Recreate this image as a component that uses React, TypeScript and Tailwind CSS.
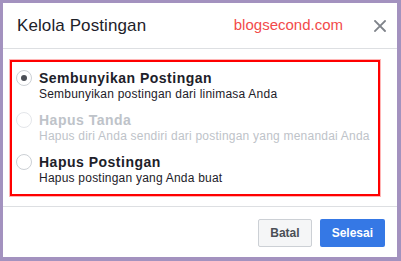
import React from "react";

function Radio({ checked, disabled }: { checked?: boolean; disabled?: boolean }) {
  return (
    <div
      className={
        "w-[16px] h-[16px] rounded-full border flex items-center justify-center shrink-0 bg-white " +
        (disabled ? "border-[#e4e6ea]" : "border-[#ccd0d5]")
      }
    >
      {checked && <div className="w-[6px] h-[6px] rounded-full bg-[#4b4f56]" />}
    </div>
  );
}

function Row({
  title,
  desc,
  checked,
  disabled,
}: {
  title: string;
  desc: string;
  checked?: boolean;
  disabled?: boolean;
}) {
  return (
    <div className="flex gap-[7px]">
      <Radio checked={checked} disabled={disabled} />
      <div className="flex flex-col">
        <div
          className={
            "text-[14px] leading-[16px] font-bold tracking-[0.5px] " +
            (disabled ? "text-[#bec3c9]" : "text-[#1d2129]")
          }
        >
          {title}
        </div>
        <div
          className={
            "text-[12px] leading-[16px] tracking-[0.22px] " +
            (disabled ? "text-[#bec3c9]" : "text-[#1d2129]")
          }
        >
          {desc}
        </div>
      </div>
    </div>
  );
}

export default function App() {
  return (
    <div
      className="w-[401px] h-[261px] bg-[#a392bf] pt-[3px] pl-[3px] pr-[4px] pb-[4px]"
      style={{ fontFamily: '"Liberation Sans", Arial, sans-serif' }}
    >
      <div className="bg-white h-full flex flex-col">
        <div className="h-[46px] shrink-0 flex items-center justify-between pl-[14px] pr-[11px] border-b border-[#dddfe2]">
          <div className="text-[17px] text-[#1d2129] tracking-[0.1px]">Kelola Postingan</div>
          <div className="flex items-center gap-[31px]">
            <div className="text-[15px] text-[#f24a4a]">blogsecond.com</div>
            <svg width="12" height="12" viewBox="0 0 12 12">
              <path d="M1 1 L11 11 M11 1 L1 11" stroke="#7f838a" strokeWidth="1.8" strokeLinecap="square" />
            </svg>
          </div>
        </div>
        <div className="flex-1 pl-[7px] pt-[11px]">
          <div className="w-[370px] h-[136px] border-2 border-[#ff0000] shadow-[0_0_0_1px_rgba(255,90,90,0.45)] pt-[8px] pl-[4px] flex flex-col gap-[10px]">
            <Row
              checked
              title="Sembunyikan Postingan"
              desc="Sembunyikan postingan dari linimasa Anda"
            />
            <Row
              disabled
              title="Hapus Tanda"
              desc="Hapus diri Anda sendiri dari postingan yang menandai Anda"
            />
            <Row title="Hapus Postingan" desc="Hapus postingan yang Anda buat" />
          </div>
        </div>
        <div className="h-[51px] shrink-0 border-t border-[#dddfe2] flex justify-end items-start pt-[12px] pr-[12px] gap-[8px]">
          <button className="h-[28px] px-[11px] rounded-[2px] border border-[#ccd0d5] bg-[#f5f6f7] text-[#4b4f56] text-[12px] font-bold">
            Batal
          </button>
          <button className="h-[28px] px-[12px] rounded-[2px] bg-[#3578e5] text-white text-[12px] font-bold">
            Selesai
          </button>
        </div>
      </div>
    </div>
  );
}
